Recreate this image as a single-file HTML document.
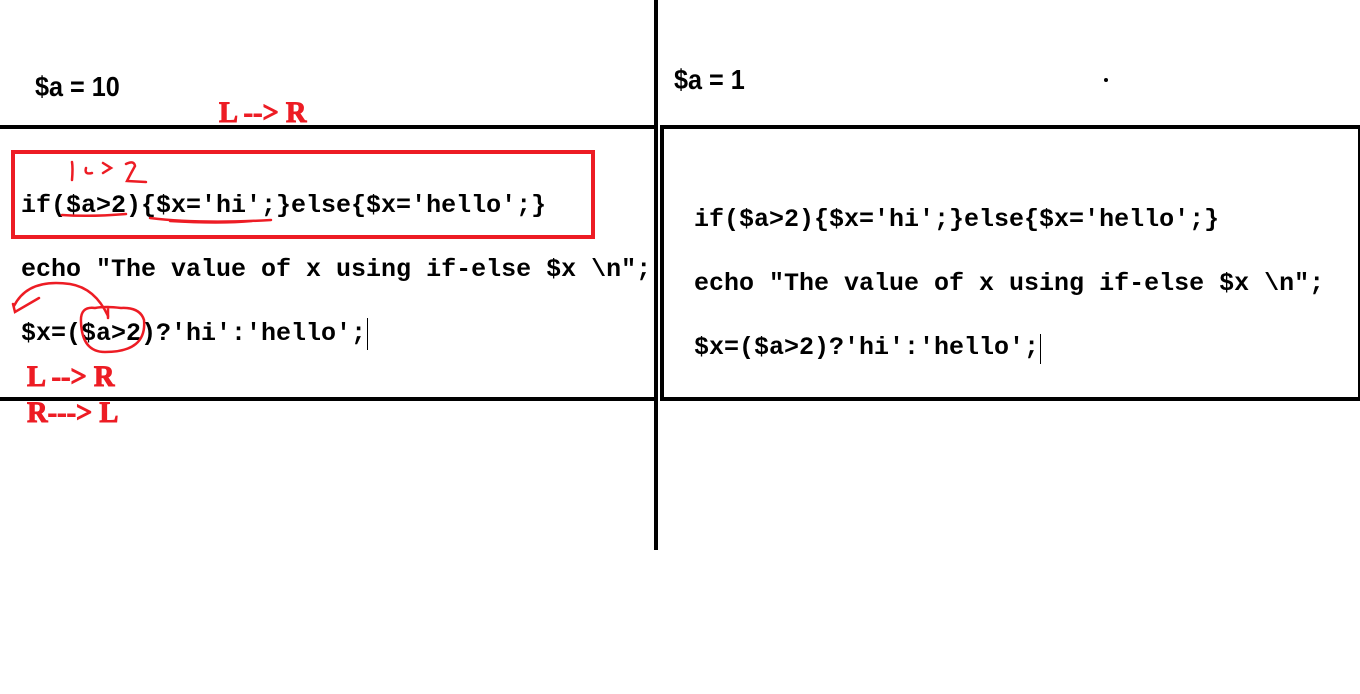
<!DOCTYPE html>
<html><head><style>
body{margin:0;width:1360px;height:694px;background:#fff;position:relative;overflow:hidden;font-family:"Liberation Sans",sans-serif}
.a{position:absolute}
.code{position:absolute;font-family:"Liberation Mono",monospace;font-weight:bold;font-size:25px;line-height:30px;white-space:pre;color:#000}
.red{position:absolute;font-family:"Liberation Serif",serif;font-weight:900;font-size:30px;color:#ed1c24;line-height:30px;-webkit-text-stroke:1px #ed1c24;transform:scaleX(0.95);transform-origin:left}
.h{position:absolute;font-weight:bold;font-size:28px;line-height:30px;transform:scaleX(0.9);transform-origin:left}
</style></head><body>
<div class="a" style="left:654px;top:0;width:4px;height:550px;background:#000"></div>
<div class="a" style="left:0;top:125px;width:656px;height:268px;border-top:4px solid #000;border-bottom:4px solid #000"></div>
<div class="a" style="left:660px;top:125px;width:694px;height:268px;border:4px solid #000"></div>
<div class="a" style="left:11px;top:150px;width:576px;height:81px;border:4px solid #ed1c24"></div>
<div class="h" style="left:35px;top:72px">$a = 10</div>
<div class="h" style="left:674px;top:65px">$a = 1</div>
<div class="a" style="left:1104px;top:78px;width:4px;height:4px;background:#000;border-radius:50%"></div>
<div class="red" style="left:219px;top:98px">L --&gt; R</div>
<div class="red" style="left:27px;top:362px">L --&gt; R</div>
<div class="red" style="left:27px;top:398px">R---&gt; L</div>
<div class="code" style="left:21px;top:191px">if($a&gt;2){$x='hi';}else{$x='hello';}</div>
<div class="code" style="left:21px;top:255px">echo "The value of x using if-else $x \n";</div>
<div class="code" style="left:21px;top:319px">$x=($a&gt;2)?'hi':'hello';</div>
<div class="a" style="left:367px;top:318px;width:1px;height:32px;background:#000"></div>
<div class="code" style="left:694px;top:205px">if($a&gt;2){$x='hi';}else{$x='hello';}</div>
<div class="code" style="left:694px;top:269px">echo "The value of x using if-else $x \n";</div>
<div class="code" style="left:694px;top:333px">$x=($a&gt;2)?'hi':'hello';</div>
<div class="a" style="left:1040px;top:334px;width:1px;height:30px;background:#000"></div>
<svg class="a" style="left:0;top:0" width="660" height="420" fill="none" stroke="#ed1c24" stroke-width="2.5" stroke-linecap="round">
<path d="M72 180 Q73 168 72 162 M86 168 Q84 175 92 173 M103 163 L111 168 L103 173 M126 164 Q134 160 135 166 Q131 173 127 181 L146 182"/>
<path d="M62 215 Q90 217 126 214"/>
<path d="M150 218 Q200 224 271 220 M170 221 Q220 224 252 221"/>
<path d="M14 306 Q28 278 70 284 Q95 288 108 316 M13 304 L15 312 L39 298"/>
<path d="M95 308 Q80 306 81 322 Q82 352 105 352 Q147 352 144 320 Q140 307 121 308 Q105 306 95 308 M108 307 L108 318"/>
</svg>
</body></html>
